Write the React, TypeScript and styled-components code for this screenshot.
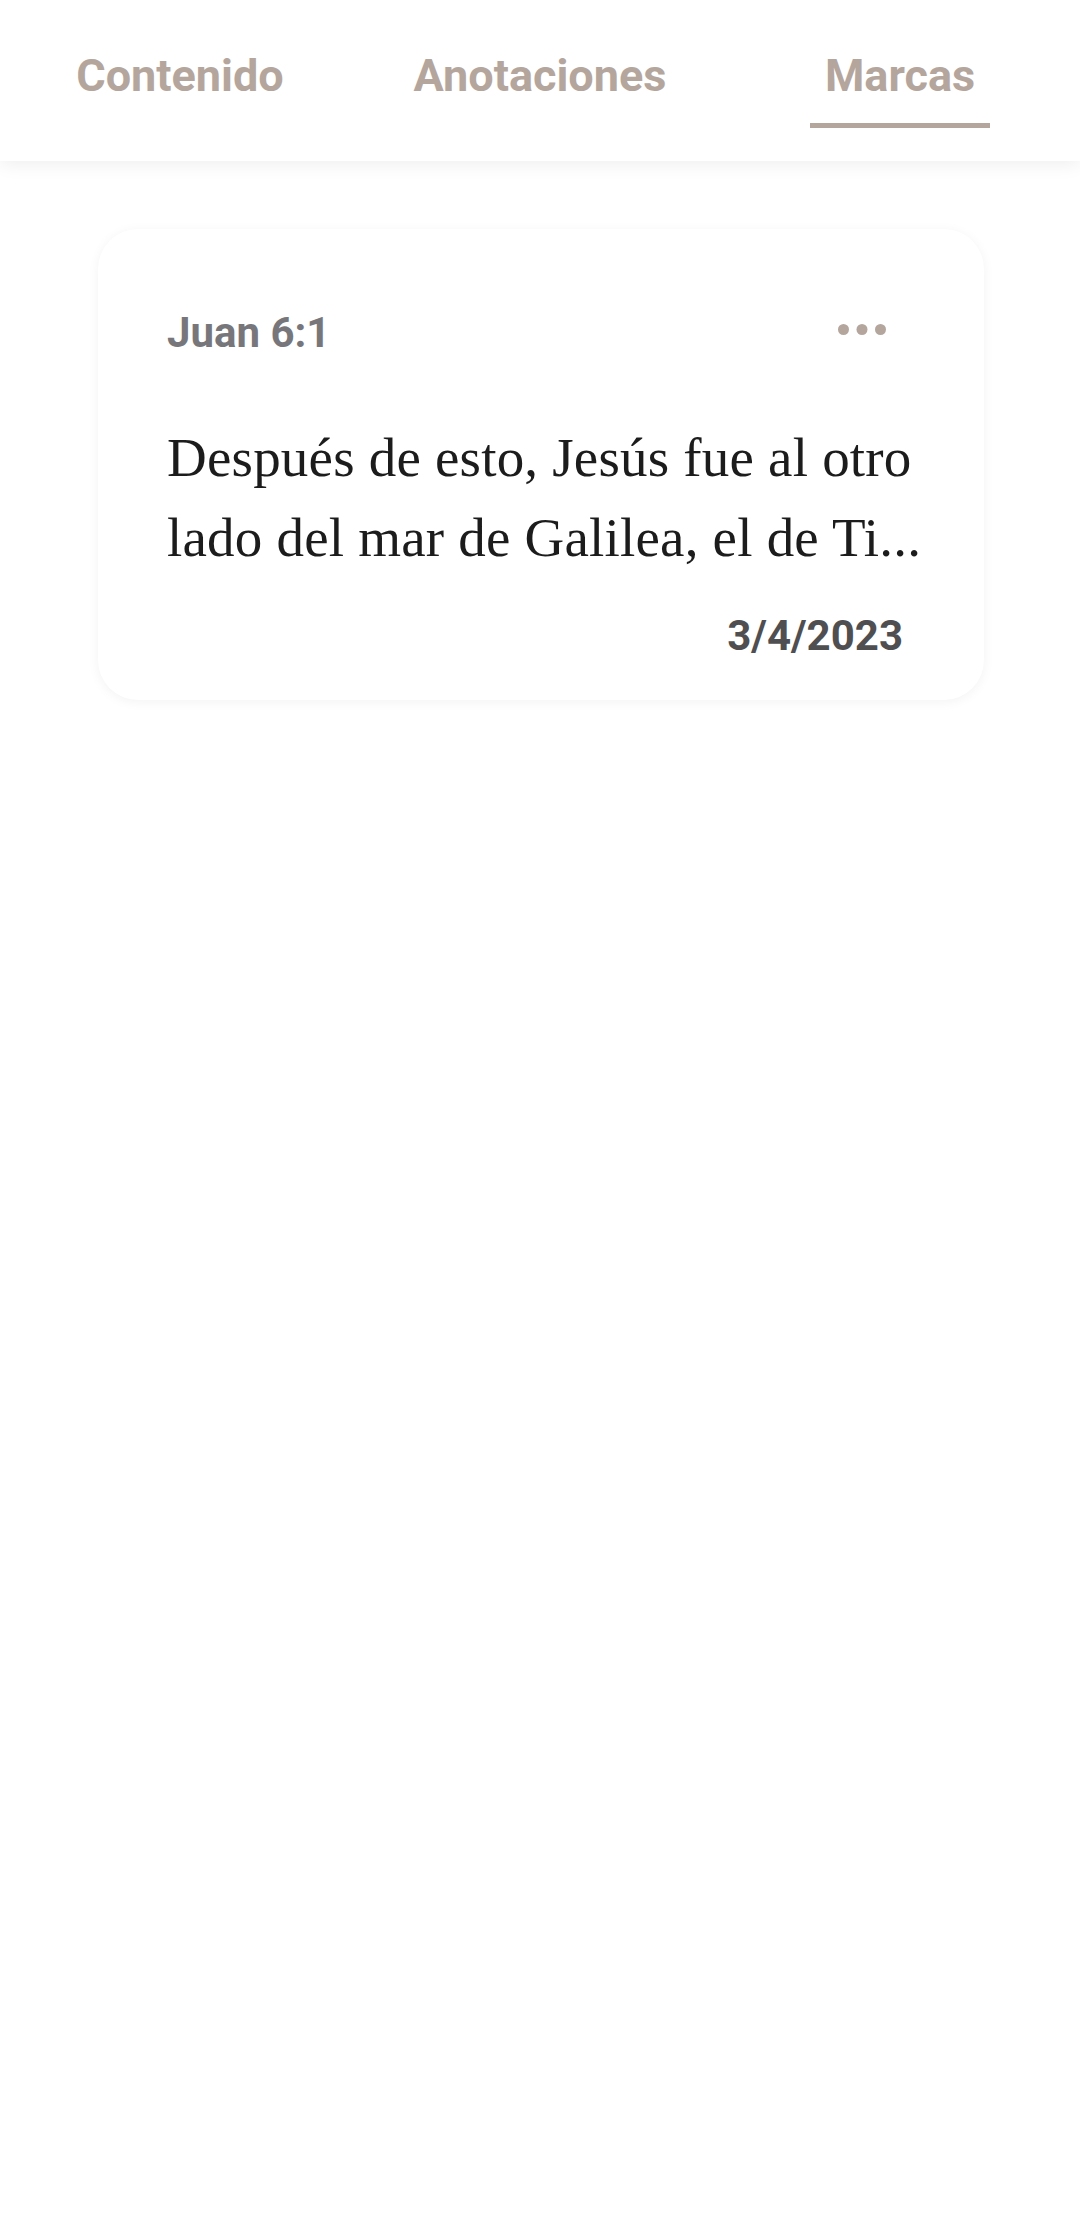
import styled, { createGlobalStyle } from 'styled-components'

const GlobalStyle = createGlobalStyle`
  html, body {
    margin: 0;
    padding: 0;
    background: #ffffff;
  }
  body {
    font-family: Roboto, "Liberation Sans", sans-serif;
  }
`

const tabs = ['Contenido', 'Anotaciones', 'Marcas']

const MoreDots = () => (
  <svg width="48" height="11" viewBox="0 0 48 11">
    <circle cx="5.5" cy="5.5" r="5.5" fill="#b4a69d" />
    <circle cx="24" cy="5.5" r="5.5" fill="#b4a69d" />
    <circle cx="42.5" cy="5.5" r="5.5" fill="#b4a69d" />
  </svg>
)

const App = () => {
  const active = 2
  return (
    <Page>
      <GlobalStyle />
      <TabBar>
        {tabs.map((label, i) => (
          <Tab key={label}>
            <TabLabel>{label}</TabLabel>
            <Indicator $active={i === active} />
          </Tab>
        ))}
      </TabBar>

      <List>
        <Card>
          <CardHead>
            <Reference>Juan 6:1</Reference>
            <MoreButton aria-label="Más opciones">
              <MoreDots />
            </MoreButton>
          </CardHead>
          <Verse>
            Después de esto, Jesús fue al otro lado del mar de Galilea, el de Ti...
          </Verse>
          <DateLabel>3/4/2023</DateLabel>
        </Card>
      </List>
    </Page>
  )
}

const Page = styled.div`
  width: 1080px;
  min-height: 2237px;
  background: #ffffff;
`

const TabBar = styled.div`
  display: grid;
  grid-template-columns: repeat(3, 1fr);
  height: 161px;
  background: #ffffff;
  box-shadow: 0 3px 18px rgba(0, 0, 0, 0.07);
  position: relative;
  z-index: 1;
`

const Tab = styled.div`
  display: flex;
  flex-direction: column;
  align-items: center;
  padding-top: 49px;
`

const TabLabel = styled.span`
  font-family: Roboto, "Liberation Sans", sans-serif;
  font-weight: 700;
  font-size: 45px;
  line-height: 53px;
  color: #b4a69d;
`

const Indicator = styled.div<{ $active: boolean }>`
  width: 180px;
  height: 5px;
  margin-top: 21px;
  background: ${({ $active }) => ($active ? '#b4a69d' : 'transparent')};
`

const List = styled.div`
  display: flex;
  flex-direction: column;
  padding: 68px 96px 0 98px;
`

const Card = styled.div`
  display: flex;
  flex-direction: column;
  background: #ffffff;
  border-radius: 40px;
  box-shadow: 0 2px 12px rgba(0, 0, 0, 0.05);
  padding: 79px 40px 39px 69px;
`

const CardHead = styled.div`
  display: flex;
  justify-content: space-between;
  align-items: flex-start;
  height: 50px;
`

const Reference = styled.span`
  font-family: Roboto, "Liberation Sans", sans-serif;
  font-weight: 700;
  font-size: 42px;
  line-height: 50px;
  color: #77777b;
`

const MoreButton = styled.button`
  display: flex;
  border: none;
  background: none;
  padding: 0;
  margin: 16px 58px 0 0;
  cursor: pointer;
`

const Verse = styled.p`
  margin: 60px 0 0;
  font-family: "Liberation Serif", "Times New Roman", serif;
  font-size: 55px;
  line-height: 80px;
  letter-spacing: 0.2px;
  color: #1c1c1c;
`

const DateLabel = styled.span`
  align-self: flex-end;
  margin: 33px 41px 0 0;
  font-family: Roboto, "Liberation Sans", sans-serif;
  font-weight: 700;
  font-size: 42px;
  line-height: 50px;
  color: #4f4f51;
`

export default App
